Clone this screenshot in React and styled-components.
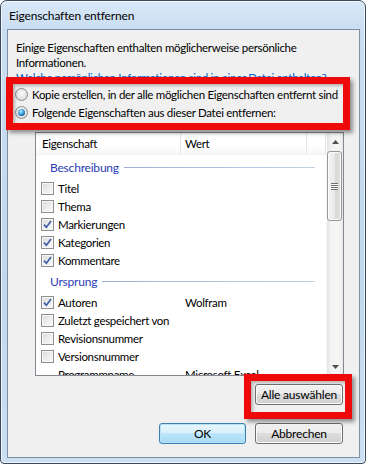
import React from "react";
import styled, { createGlobalStyle } from "styled-components";

const GlobalStyle = createGlobalStyle`
  html, body {
    margin: 0;
    padding: 0;
    background: #ffffff;
  }
  body {
    font-family: Lato, "Liberation Sans", sans-serif;
    font-size: 11.5px;
    letter-spacing: -0.3px;
    color: #000;
  }
`;

const Window = styled.div`
  position: relative;
  box-sizing: border-box;
  width: 366px;
  height: 464px;
  display: flex;
  flex-direction: column;
  padding: 0 5px 5px 6px;
  border: 1px solid #3a4a5c;
  border-radius: 7px 7px 4px 4px;
  background: linear-gradient(
    180deg,
    #d9e8f7 0px,
    #cadef2 28px,
    #c2d8ee 60%,
    #cbdff3 100%
  );
  box-shadow: inset 0 0 0 1px rgba(255, 255, 255, 0.65);
`;

const TitleBar = styled.div`
  height: 28px;
  display: flex;
  align-items: center;
  padding-left: 2px;
  font-size: 12px;
  letter-spacing: -0.15px;
  color: #000;
`;

const Client = styled.div`
  flex: 1;
  display: flex;
  flex-direction: column;
  border: 1px solid #7f8fa2;
  background: #f0f0f0;
  padding: 10px 16px 0 8px;
`;

const Intro = styled.p`
  margin: 0;
  line-height: 15px;
`;

const Link = styled.a`
  display: block;
  line-height: 15px;
  color: #0066cc;
  text-decoration: underline;
  white-space: nowrap;
`;

const Options = styled.div`
  margin-top: 0;
  display: flex;
  flex-direction: column;
`;

const Option = styled.label`
  height: 18px;
  display: flex;
  align-items: center;
  gap: 4px;
  margin-left: -1px;
  white-space: nowrap;
`;

const Radio = styled.span`
  box-sizing: border-box;
  width: 13px;
  height: 13px;
  border-radius: 50%;
  border: 1px solid #8a8a8a;
  background: radial-gradient(circle at 50% 40%, #fbfbfb 0%, #e2e2e2 60%, #cfcfcf 100%);
  display: flex;
  align-items: center;
  justify-content: center;
  flex-shrink: 0;
  &::after {
    content: "";
    width: 7px;
    height: 7px;
    border-radius: 50%;
    display: ${(p) => (p.$on ? "block" : "none")};
    background: radial-gradient(
      circle at 40% 35%,
      #c4efff 0%,
      #4db3ea 35%,
      #1a6bb0 70%,
      #0c3f73 100%
    );
  }
`;

const List = styled.div`
  box-sizing: border-box;
  height: 244px;
  margin: 11px -1px 0 19px;
  border: 1px solid #828790;
  background: #ffffff;
  display: grid;
  grid-template-columns: 1fr 17px;
  overflow: hidden;
`;

const ListBody = styled.div`
  overflow: hidden;
`;

const Header = styled.div`
  height: 21px;
  display: grid;
  grid-template-columns: 145px 126px 1fr;
  background: linear-gradient(180deg, #ffffff 0%, #ffffff 55%, #f6f7f9 100%);
  border-bottom: 1px solid #f2f3f5;
`;

const HeaderCell = styled.div`
  display: flex;
  align-items: center;
  padding-left: ${(p) => p.$pad}px;
  border-right: 1px solid #e3e5e8;
`;

const Group = styled.div`
  height: 24px;
  display: flex;
  align-items: center;
  gap: 5px;
  padding: 0 11px 0 14px;
  color: #2c3cb8;
  font-size: 12px;
  letter-spacing: -0.2px;
  &::after {
    content: "";
    flex: 1;
    height: 1px;
    margin-top: 1px;
    background: linear-gradient(90deg, #9fb0d6, #c5d0e8);
  }
`;

const Row = styled.div`
  height: 18px;
  display: grid;
  grid-template-columns: 145px 1fr;
  align-items: center;
  white-space: nowrap;
`;

const Name = styled.div`
  display: flex;
  align-items: center;
  gap: 4px;
  padding-left: ${(p) => (p.$noCheck ? 22 : 5)}px;
`;

const Value = styled.div`
  padding-left: 4px;
`;

const Check = styled.span`
  box-sizing: border-box;
  width: 13px;
  height: 13px;
  border: 1px solid #8e8f8f;
  background: linear-gradient(135deg, #d8d8d8 0%, #eeeeee 55%, #fbfbfb 100%);
  box-shadow: inset 0 0 0 1px #f7f7f7;
  display: flex;
  align-items: center;
  justify-content: center;
  flex-shrink: 0;
`;

const Scrollbar = styled.div`
  display: flex;
  flex-direction: column;
  background: linear-gradient(90deg, #e4e4e4 0%, #f3f3f3 25%, #f5f5f5 75%, #eaeaea 100%);
  border-left: 1px solid #f8f8f8;
`;

const ScrollButton = styled.div`
  height: 17px;
  display: flex;
  align-items: center;
  justify-content: center;
  flex-shrink: 0;
`;

const Track = styled.div`
  flex: 1;
`;

const Thumb = styled.div`
  box-sizing: border-box;
  height: 70px;
  margin: 1px 1px 0 0;
  border: 1px solid #979797;
  border-radius: 3px;
  background: linear-gradient(90deg, #f3f3f3 0%, #e9e9e9 50%, #d9d9d9 51%, #dddddd 100%);
  box-shadow: inset 0 0 0 1px #fbfbfb;
  display: flex;
  align-items: center;
  justify-content: center;
`;

const Grip = styled.div`
  width: 7px;
  height: 7px;
  background: repeating-linear-gradient(
    180deg,
    #6f6f6f 0px,
    #6f6f6f 1px,
    #fafafa 1px,
    #fafafa 2px
  );
`;

const ButtonRow = styled.div`
  display: flex;
  justify-content: flex-end;
  gap: 9px;
  margin-top: ${(p) => p.$gap}px;
`;

const Button = styled.button`
  box-sizing: border-box;
  width: ${(p) => p.$w || 88}px;
  height: 21px;
  padding: 0;
  font-family: inherit;
  font-size: 12px;
  letter-spacing: -0.2px;
  color: #000;
  border-radius: 3px;
  border: 1px solid ${(p) => (p.$default ? "#3c7fb1" : "#707070")};
  background: ${(p) =>
    p.$default
      ? "linear-gradient(180deg, #eaf6fd 0%, #d9f0fc 45%, #bee6fd 50%, #a7d9f5 100%)"
      : "linear-gradient(180deg, #f2f2f2 0%, #ebebeb 45%, #dddddd 50%, #cfcfcf 100%)"};
  box-shadow: inset 0 0 0 1px ${(p) => (p.$default ? "#b7e3f9" : "#fcfcfc")};
`;

const Highlight = styled.div`
  position: absolute;
  left: ${(p) => p.$x}px;
  top: ${(p) => p.$y}px;
  width: ${(p) => p.$w}px;
  height: ${(p) => p.$h}px;
  box-sizing: border-box;
  border: 7px solid #ee0a0a;
  box-shadow: 3px 3px 4px rgba(0, 0, 0, 0.4), inset 2px 2px 3px rgba(0, 0, 0, 0.25);
  pointer-events: none;
`;

const rows = [
  { group: "Beschreibung" },
  { label: "Titel" },
  { label: "Thema" },
  { label: "Markierungen", checked: true },
  { label: "Kategorien", checked: true },
  { label: "Kommentare", checked: true },
  { group: "Ursprung" },
  { label: "Autoren", checked: true, value: "Wolfram" },
  { label: "Zuletzt gespeichert von" },
  { label: "Revisionsnummer" },
  { label: "Versionsnummer" },
  { label: "Programmname", value: "Microsoft Excel", noCheck: true },
];

const CheckMark = () => (
  <svg width="9" height="9" viewBox="0 0 9 9">
    <path d="M1 4.6 L3.4 7.2 L8 1" fill="none" stroke="#3d5aa6" strokeWidth="1.6" />
  </svg>
);

const Arrow = ({ down }) => (
  <svg width="7" height="4" viewBox="0 0 7 4">
    <path d={down ? "M0 0 H7 L3.5 4 Z" : "M0 4 H7 L3.5 0 Z"} fill="#505050" />
  </svg>
);

export default function App() {
  return (
    <>
      <GlobalStyle />
      <Window>
        <TitleBar>Eigenschaften entfernen</TitleBar>
        <Client>
          <Intro>
            Einige Eigenschaften enthalten möglicherweise persönliche
            <br />
            Informationen.
          </Intro>
          <Link href="#">
            Welche persönlichen Informationen sind in einer Datei enthalten?
          </Link>
          <Options>
            <Option>
              <Radio />
              Kopie erstellen, in der alle möglichen Eigenschaften entfernt sind
            </Option>
            <Option>
              <Radio $on />
              Folgende Eigenschaften aus dieser Datei entfernen:
            </Option>
          </Options>
          <List>
            <ListBody>
              <Header>
                <HeaderCell $pad={6}>Eigenschaft</HeaderCell>
                <HeaderCell $pad={4}>Wert</HeaderCell>
                <HeaderCell $pad={0} />
              </Header>
              {rows.map((r, i) =>
                r.group ? (
                  <Group key={i}>{r.group}</Group>
                ) : (
                  <Row key={i}>
                    <Name $noCheck={r.noCheck}>
                      {!r.noCheck && <Check>{r.checked && <CheckMark />}</Check>}
                      {r.label}
                    </Name>
                    <Value>{r.value}</Value>
                  </Row>
                )
              )}
            </ListBody>
            <Scrollbar>
              <ScrollButton>
                <Arrow />
              </ScrollButton>
              <Track>
                <Thumb>
                  <Grip />
                </Thumb>
              </Track>
              <ScrollButton>
                <Arrow down />
              </ScrollButton>
            </Scrollbar>
          </List>
          <ButtonRow $gap={8}>
            <Button>Alle auswählen</Button>
          </ButtonRow>
          <ButtonRow $gap={18}>
            <Button $default $w={87}>OK</Button>
            <Button>Abbrechen</Button>
          </ButtonRow>
        </Client>
        <Highlight $x={5} $y={76} $w={344} $h={53} />
        <Highlight $x={243} $y={373} $w={108} $h={45} />
      </Window>
    </>
  );
}
